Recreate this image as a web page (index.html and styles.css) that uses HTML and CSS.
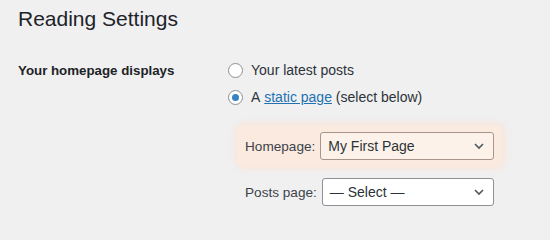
FILE: index.html
```html
<!DOCTYPE html>
<html>
<head>
<meta charset="utf-8">
<link rel="stylesheet" href="styles.css">
</head>
<body>
<div class="wrap">
  <h1 class="title">Reading Settings</h1>
  <div class="form-row">
    <div class="th">Your homepage displays</div>
    <div class="td">
      <label class="radio-line"><span class="radio"></span>Your latest posts</label>
      <label class="radio-line"><span class="radio checked"></span>A&nbsp;<a class="link" href="#">static page</a>&nbsp;(select below)</label>
      <div class="sub highlight">
        <span class="sub-label">Homepage:</span>
        <div class="select select-hl"><span>My First Page</span>
          <svg class="chev" width="12" height="8" viewBox="0 0 12 8"><path d="M2 2 L6 6 L10 2" fill="none" stroke="#50575e" stroke-width="1.6"/></svg>
        </div>
      </div>
      <div class="sub">
        <span class="sub-label">Posts page:</span>
        <div class="select"><span>— Select —</span>
          <svg class="chev" width="12" height="8" viewBox="0 0 12 8"><path d="M2 2 L6 6 L10 2" fill="none" stroke="#50575e" stroke-width="1.6"/></svg>
        </div>
      </div>
    </div>
  </div>
</div>
</body>
</html>
```
FILE: styles.css
```css
html, body {
  margin: 0;
  padding: 0;
  background: #f0f0f1;
}
body {
  font-family: "Liberation Sans", Arial, sans-serif;
  color: #3c434a;
  width: 550px;
  height: 239px;
  overflow: hidden;
}
.wrap {
  padding: 5px 0 0 18px;
}
.title {
  margin: 0;
  font-size: 21px;
  font-weight: 400;
  line-height: 28px;
  color: #1d2327;
}
.form-row {
  display: grid;
  grid-template-columns: 210px 1fr;
  margin-top: 24px;
}
.th {
  font-size: 13.3px;
  font-weight: 700;
  line-height: 27px;
  color: #1d2327;
}
.td {
  display: flex;
  flex-direction: column;
}
.radio-line {
  display: flex;
  align-items: center;
  height: 27px;
  font-size: 14px;
  line-height: 27px;
  color: #2c3338;
}
.radio {
  box-sizing: border-box;
  width: 15px;
  height: 15px;
  border: 1px solid #8c8f94;
  border-radius: 50%;
  background: #fff;
  margin: 0 8px 0 0;
  display: flex;
  align-items: center;
  justify-content: center;
}
.radio.checked::before {
  content: "";
  width: 7px;
  height: 7px;
  border-radius: 50%;
  background: #3582c4;
}
.link {
  color: #2271b1;
  text-decoration: underline;
}
.sub {
  display: flex;
  align-items: center;
  gap: 5px;
  margin-left: 9px;
  padding: 7px 9px 7px 8px;
  width: 249px;
  height: 28px;
  margin-top: 4px;
}
.sub.highlight {
  margin-top: 14px;
  background: #fbeadf;
  border-radius: 6px;
  box-shadow: 0 0 8px 1px #f9e3d4;
}
.sub-label {
  font-size: 13.6px;
  color: #3c434a;
  white-space: nowrap;
}
.select {
  box-sizing: border-box;
  flex: 1;
  height: 28px;
  border: 1px solid #8c8f94;
  border-radius: 3px;
  background: #fff;
  display: flex;
  align-items: center;
  justify-content: space-between;
  padding: 0 8px 0 7px;
  font-size: 14px;
  color: #2c3338;
}
.select-hl {
  background: #fdf2e9;
  border-color: #a8968a;
}
.chev {
  display: block;
}
```
